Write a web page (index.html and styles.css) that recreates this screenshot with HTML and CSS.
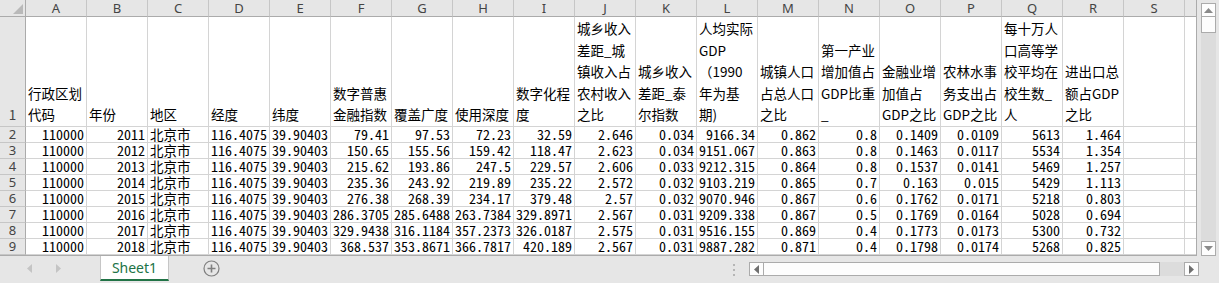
FILE: index.html
```html
<!DOCTYPE html>
<html lang="zh-CN">
<head>
    <meta charset="UTF-8">
    <title>Sheet1</title>
    <link rel="stylesheet" href="styles.css">
</head>
<body>
    <div class="workbook">
        <div class="main">
            <div class="grid-wrap">
                <table class="grid">
                    <colgroup>
                        <col class="col-rowhead">
                        <col class="col"><col class="col"><col class="col"><col class="col"><col class="col">
                        <col class="col"><col class="col"><col class="col"><col class="col"><col class="col">
                        <col class="col"><col class="col"><col class="col"><col class="col"><col class="col">
                        <col class="col"><col class="col"><col class="col"><col class="col"><col class="col">
                    </colgroup>
                    <tr class="col-heads">
                        <th class="corner"></th>
                        <th>A</th><th>B</th><th>C</th><th>D</th><th>E</th><th>F</th><th>G</th><th>H</th><th>I</th><th>J</th>
                        <th>K</th><th>L</th><th>M</th><th>N</th><th>O</th><th>P</th><th>Q</th><th>R</th><th>S</th><th>T</th>
                    </tr>
                    <tr class="title-row">
                        <th class="rownum">1</th>
                        <td>行政区划<br>代码</td>
                        <td>年份</td>
                        <td>地区</td>
                        <td>经度</td>
                        <td>纬度</td>
                        <td>数字普惠<br>金融指数</td>
                        <td>覆盖广度</td>
                        <td>使用深度</td>
                        <td>数字化程<br>度</td>
                        <td>城乡收入<br>差距_城<br>镇收入占<br>农村收入<br>之比</td>
                        <td>城乡收入<br>差距_泰<br>尔指数</td>
                        <td>人均实际<br>GDP<br>（1990<br>年为基<br>期)</td>
                        <td>城镇人口<br>占总人口<br>之比</td>
                        <td>第一产业<br>增加值占<br>GDP比重<br>_</td>
                        <td>金融业增<br>加值占<br>GDP之比</td>
                        <td>农林水事<br>务支出占<br>GDP之比</td>
                        <td>每十万人<br>口高等学<br>校平均在<br>校生数_<br>人</td>
                        <td>进出口总<br>额占GDP<br>之比</td>
                        <td></td>
                        <td></td>
                    </tr>
                    <tr class="data-row">
                        <th class="rownum">2</th>
                        <td class="num">110000</td><td class="num">2011</td><td class="txt">北京市</td><td class="num">116.4075</td><td class="num">39.90403</td>
                        <td class="num">79.41</td><td class="num">97.53</td><td class="num">72.23</td><td class="num">32.59</td><td class="num">2.646</td>
                        <td class="num">0.034</td><td class="num">9166.34</td><td class="num">0.862</td><td class="num">0.8</td><td class="num">0.1409</td>
                        <td class="num">0.0109</td><td class="num">5613</td><td class="num">1.464</td><td></td><td></td>
                    </tr>
                    <tr class="data-row">
                        <th class="rownum">3</th>
                        <td class="num">110000</td><td class="num">2012</td><td class="txt">北京市</td><td class="num">116.4075</td><td class="num">39.90403</td>
                        <td class="num">150.65</td><td class="num">155.56</td><td class="num">159.42</td><td class="num">118.47</td><td class="num">2.623</td>
                        <td class="num">0.034</td><td class="num">9151.067</td><td class="num">0.863</td><td class="num">0.8</td><td class="num">0.1463</td>
                        <td class="num">0.0117</td><td class="num">5534</td><td class="num">1.354</td><td></td><td></td>
                    </tr>
                    <tr class="data-row">
                        <th class="rownum">4</th>
                        <td class="num">110000</td><td class="num">2013</td><td class="txt">北京市</td><td class="num">116.4075</td><td class="num">39.90403</td>
                        <td class="num">215.62</td><td class="num">193.86</td><td class="num">247.5</td><td class="num">229.57</td><td class="num">2.606</td>
                        <td class="num">0.033</td><td class="num">9212.315</td><td class="num">0.864</td><td class="num">0.8</td><td class="num">0.1537</td>
                        <td class="num">0.0141</td><td class="num">5469</td><td class="num">1.257</td><td></td><td></td>
                    </tr>
                    <tr class="data-row">
                        <th class="rownum">5</th>
                        <td class="num">110000</td><td class="num">2014</td><td class="txt">北京市</td><td class="num">116.4075</td><td class="num">39.90403</td>
                        <td class="num">235.36</td><td class="num">243.92</td><td class="num">219.89</td><td class="num">235.22</td><td class="num">2.572</td>
                        <td class="num">0.032</td><td class="num">9103.219</td><td class="num">0.865</td><td class="num">0.7</td><td class="num">0.163</td>
                        <td class="num">0.015</td><td class="num">5429</td><td class="num">1.113</td><td></td><td></td>
                    </tr>
                    <tr class="data-row">
                        <th class="rownum">6</th>
                        <td class="num">110000</td><td class="num">2015</td><td class="txt">北京市</td><td class="num">116.4075</td><td class="num">39.90403</td>
                        <td class="num">276.38</td><td class="num">268.39</td><td class="num">234.17</td><td class="num">379.48</td><td class="num">2.57</td>
                        <td class="num">0.032</td><td class="num">9070.946</td><td class="num">0.867</td><td class="num">0.6</td><td class="num">0.1762</td>
                        <td class="num">0.0171</td><td class="num">5218</td><td class="num">0.803</td><td></td><td></td>
                    </tr>
                    <tr class="data-row">
                        <th class="rownum">7</th>
                        <td class="num">110000</td><td class="num">2016</td><td class="txt">北京市</td><td class="num">116.4075</td><td class="num">39.90403</td>
                        <td class="num">286.3705</td><td class="num">285.6488</td><td class="num">263.7384</td><td class="num">329.8971</td><td class="num">2.567</td>
                        <td class="num">0.031</td><td class="num">9209.338</td><td class="num">0.867</td><td class="num">0.5</td><td class="num">0.1769</td>
                        <td class="num">0.0164</td><td class="num">5028</td><td class="num">0.694</td><td></td><td></td>
                    </tr>
                    <tr class="data-row">
                        <th class="rownum">8</th>
                        <td class="num">110000</td><td class="num">2017</td><td class="txt">北京市</td><td class="num">116.4075</td><td class="num">39.90403</td>
                        <td class="num">329.9438</td><td class="num">316.1184</td><td class="num">357.2373</td><td class="num">326.0187</td><td class="num">2.575</td>
                        <td class="num">0.031</td><td class="num">9516.155</td><td class="num">0.869</td><td class="num">0.4</td><td class="num">0.1773</td>
                        <td class="num">0.0173</td><td class="num">5300</td><td class="num">0.732</td><td></td><td></td>
                    </tr>
                    <tr class="data-row">
                        <th class="rownum">9</th>
                        <td class="num">110000</td><td class="num">2018</td><td class="txt">北京市</td><td class="num">116.4075</td><td class="num">39.90403</td>
                        <td class="num">368.537</td><td class="num">353.8671</td><td class="num">366.7817</td><td class="num">420.189</td><td class="num">2.567</td>
                        <td class="num">0.031</td><td class="num">9887.282</td><td class="num">0.871</td><td class="num">0.4</td><td class="num">0.1798</td>
                        <td class="num">0.0174</td><td class="num">5268</td><td class="num">0.825</td><td></td><td></td>
                    </tr>
                </table>
            </div>

            <!-- vertical scrollbar -->
            <div class="vscroll">
                <div class="sb-btn">
                    <svg width="9" height="5" viewBox="0 0 9 5"><polygon points="0,5 9,5 4.5,0" fill="#8a8a8a"/></svg>
                </div>
                <div class="v-thumb"></div>
                <div class="v-track"></div>
                <div class="sb-btn down">
                    <svg width="9" height="5" viewBox="0 0 9 5"><polygon points="0,0 9,0 4.5,5" fill="#8a8a8a"/></svg>
                </div>
            </div>
        </div>

        <!-- sheet tabs + horizontal scrollbar -->
        <div class="tabbar">
            <div class="tab-nav">
                <svg width="5" height="9" viewBox="0 0 5 9"><polygon points="5,0 5,9 0,4.5" fill="#c4c4c4"/></svg>
                <svg width="5" height="9" viewBox="0 0 5 9"><polygon points="0,0 0,9 5,4.5" fill="#c4c4c4"/></svg>
            </div>
            <div class="sheet-tab">Sheet1</div>
            <div class="add-sheet">
                <svg width="17" height="17" viewBox="0 0 17 17">
                    <circle cx="8.5" cy="8.5" r="7.5" fill="none" stroke="#7f7f7f" stroke-width="1.2"/>
                    <path d="M8.5 4.5 V12.5 M4.5 8.5 H12.5" stroke="#7f7f7f" stroke-width="1.6"/>
                </svg>
            </div>
            <div class="splitter">
                <span></span><span></span><span></span>
            </div>
            <div class="hscroll">
                <div class="sb-btn h">
                    <svg width="5" height="9" viewBox="0 0 5 9"><polygon points="5,0 5,9 0,4.5" fill="#6f6f6f"/></svg>
                </div>
                <div class="h-thumb"></div>
                <div class="h-track"></div>
                <div class="sb-btn h">
                    <svg width="5" height="9" viewBox="0 0 5 9"><polygon points="0,0 0,9 5,4.5" fill="#6f6f6f"/></svg>
                </div>
            </div>
        </div>
    </div>
</body>
</html>
```

FILE: styles.css
```css
* {
    box-sizing: border-box;
    margin: 0;
    padding: 0;
}

body {
    width: 1219px;
    height: 283px;
    overflow: hidden;
    background-color: #e6e6e6;
    font-family: "Noto Sans", "Noto Sans CJK SC", sans-serif;
    color: #000;
}

.workbook {
    display: flex;
    flex-direction: column;
    height: 283px;
}

.main {
    display: flex;
    height: 256px;
}

.grid-wrap {
    width: 1197px;
    height: 256px;
    overflow: hidden;
    background-color: #fff;
    border-right: 1px solid #ababab;
    border-bottom: 1px solid #ababab;
}

.grid {
    border-collapse: separate;
    border-spacing: 0;
    table-layout: fixed;
    width: 1246px;
}

.col-rowhead {
    width: 26px;
}

.col {
    width: 61px;
}

.grid th, .grid td {
    border-right: 1px solid #d4d4d4;
    border-bottom: 1px solid #d4d4d4;
    white-space: nowrap;
    overflow: hidden;
    padding: 0 2px;
}

/* column letters */
.col-heads th {
    height: 17px;
    background-color: #e6e6e6;
    border-right: 1px solid #c6c6c6;
    border-bottom: 1px solid #ababab;
    font-family: "Noto Sans", sans-serif;
    font-weight: normal;
    font-size: 13px;
    line-height: 15px;
    color: #444;
    text-align: center;
}

.col-heads th.corner {
    position: relative;
    border-right: 1px solid #ababab;
}

.corner::after {
    content: "";
    position: absolute;
    right: 2px;
    bottom: 2px;
    border-left: 10px solid transparent;
    border-bottom: 10px solid #b9b9b9;
}

/* row numbers */
.rownum {
    background-color: #e6e6e6;
    font-family: "Noto Sans", sans-serif;
    font-weight: normal;
    font-size: 13px;
    color: #444;
    text-align: center;
    padding: 0;
}

.grid th.rownum {
    border-right: 1px solid #ababab;
    border-bottom: 1px solid #c6c6c6;
}

.title-row {
    height: 110px;
}

.title-row td, .title-row th {
    vertical-align: bottom;
    font-family: "Noto Sans CJK SC", sans-serif;
    font-size: 13.5px;
    line-height: 21.6px;
    text-align: left;
}

.title-row th.rownum {
    text-align: center;
    line-height: 21.6px;
}

.data-row {
    height: 16px;
}

.data-row td, .data-row th {
    height: 16px;
    line-height: 15px;
    vertical-align: bottom;
}

.num {
    text-align: right;
    font-family: "Noto Sans CJK SC", sans-serif;
    font-feature-settings: "hwid";
    font-size: 14px;
}

.txt {
    font-family: "Noto Sans CJK SC", sans-serif;
    font-size: 13.5px;
}

/* vertical scrollbar */
.vscroll {
    width: 22px;
    display: flex;
    flex-direction: column;
    padding: 3px 3px 0 4px;
}

.sb-btn {
    display: flex;
    align-items: center;
    justify-content: center;
    height: 14px;
    background-color: #fdfdfd;
    border: 1px solid #ababab;
}

.sb-btn.down {
    height: 15px;
}

.v-thumb {
    height: 16px;
    background-color: #fdfdfd;
    border: 1px solid #ababab;
    border-top: none;
}

.v-track {
    flex: 1;
    background-color: #dcdcdc;
}

/* bottom bar */
.tabbar {
    display: flex;
    align-items: flex-start;
    height: 27px;
}

.tab-nav {
    display: flex;
    align-items: center;
    gap: 24px;
    width: 100px;
    height: 24px;
    padding-left: 27px;
}

.sheet-tab {
    width: 69px;
    height: 25px;
    background-color: #fff;
    border-left: 1px solid #c6c6c6;
    border-right: 1px solid #c6c6c6;
    border-bottom: 2px solid #217346;
    color: #217346;
    font-family: "Noto Sans", sans-serif;
    font-size: 14px;
    line-height: 23px;
    text-align: center;
}

.add-sheet {
    margin-left: 34px;
    padding-top: 4px;
}

.splitter {
    display: flex;
    flex-direction: column;
    gap: 3px;
    margin-left: 513px;
    padding-top: 8px;
}

.splitter span {
    width: 2px;
    height: 2px;
    background-color: #b5b5b5;
}

.hscroll {
    display: flex;
    margin-left: 14px;
    margin-top: 6px;
    height: 14px;
    width: 450px;
}

.sb-btn.h {
    width: 15px;
    height: 14px;
}

.h-thumb {
    width: 396px;
    background-color: #fdfdfd;
    border-top: 1px solid #ababab;
    border-bottom: 1px solid #ababab;
    border-right: 1px solid #ababab;
}

.h-track {
    flex: 1;
    background-color: #dcdcdc;
}
```
